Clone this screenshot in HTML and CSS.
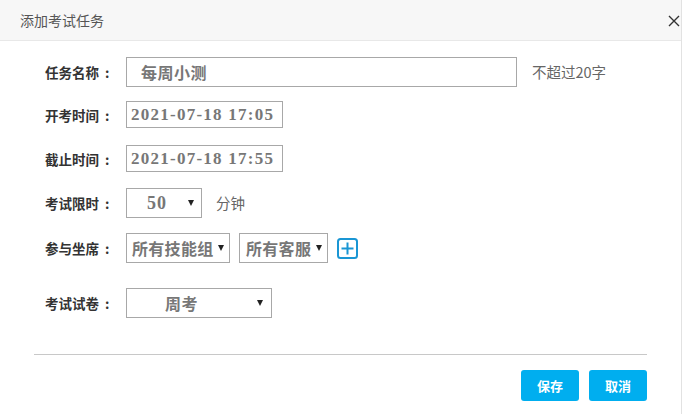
FILE: index.html
```html
<!DOCTYPE html>
<html>
<head>
<meta charset="utf-8">
<link rel="stylesheet" href="styles.css">
</head>
<body>
<div class="dialog">
  <div class="header">
    <span class="title">添加考试任务</span>
    <svg class="close" width="12" height="12" viewBox="0 0 12 12"><path d="M1 1 L11 11 M11 1 L1 11" stroke="#333" stroke-width="1.4" fill="none"/></svg>
  </div>
  <div class="form">
    <div class="row r1">
      <span class="label">任务名称<span class="colon">:</span></span>
      <div class="box name">每周小测</div>
      <span class="hint">不超过20字</span>
    </div>
    <div class="row r2">
      <span class="label">开考时间<span class="colon">:</span></span>
      <div class="box date">2021-07-18 17:05</div>
    </div>
    <div class="row r3">
      <span class="label">截止时间<span class="colon">:</span></span>
      <div class="box date">2021-07-18 17:55</div>
    </div>
    <div class="row r4">
      <span class="label">考试限时<span class="colon">:</span></span>
      <div class="box sel s-min"><span class="num">50</span><i class="arrow"></i></div>
      <span class="unit">分钟</span>
    </div>
    <div class="row r5">
      <span class="label">参与坐席<span class="colon">:</span></span>
      <div class="box sel s-group"><span>所有技能组</span><i class="arrow"></i></div>
      <div class="box sel s-agent"><span>所有客服</span><i class="arrow"></i></div>
      <svg class="plus" width="21" height="21" viewBox="0 0 21 21"><rect x="1" y="1" width="19" height="19" rx="2.5" fill="none" stroke="#1a96d4" stroke-width="2"/><path d="M10.5 4.5 V16.5 M4.5 10.5 H16.5" stroke="#1a96d4" stroke-width="2"/></svg>
    </div>
    <div class="row r6">
      <span class="label">考试试卷<span class="colon">:</span></span>
      <div class="box sel s-paper"><span>周考</span><i class="arrow"></i></div>
    </div>
  </div>
  <div class="divider"></div>
  <div class="actions">
    <button class="btn">保存</button>
    <button class="btn">取消</button>
  </div>
</div>
</body>
</html>
```
FILE: styles.css
```css
html, body {
  margin: 0;
  padding: 0;
  background: #fff;
}
body {
  font-family: "Noto Sans CJK SC", "Liberation Sans", sans-serif;
}
.dialog {
  width: 681px;
  height: 414px;
  border-right: 1px solid #e2e2e2;
  box-sizing: content-box;
}
.header {
  height: 41px;
  box-sizing: border-box;
  background: #f7f7f7;
  border-bottom: 1px solid #e8e8e8;
  display: flex;
  align-items: center;
  padding: 0 1px 0 20px;
}
.title {
  font-size: 14px;
  color: #555;
  line-height: 20px;
  flex: 1;
}
.close {
  display: block;
  margin-top: 2px;
}
.form {
  padding-left: 45px;
}
.row {
  display: flex;
  align-items: center;
}
.r1 { margin-top: 16px; }
.r2 { margin-top: 14px; }
.r3 { margin-top: 17px; }
.r4 { margin-top: 16px; }
.r5 { margin-top: 15px; }
.r6 { margin-top: 25px; }
.label {
  width: 81px;
  font-size: 13.5px;
  font-weight: 700;
  color: #333;
  line-height: 20px;
}
.colon {
  margin-left: 6px;
}
.box {
  box-sizing: border-box;
  border: 1px solid #a8a8a8;
  height: 30px;
  display: flex;
  align-items: center;
  color: #777;
  font-size: 16px;
  font-weight: 700;
  line-height: 20px;
  white-space: nowrap;
}
.name {
  width: 391px;
  padding-left: 14px;
  letter-spacing: 0.5px;
}
.hint {
  margin-left: 15px;
  font-size: 14.5px;
  color: #666;
  line-height: 20px;
}
.date {
  width: 157px;
  height: 27px;
  padding-left: 4px;
  font-family: "Liberation Serif", serif;
  font-size: 17px;
  letter-spacing: 1.25px;
}
.sel {
  padding-right: 7px;
}
.sel .arrow {
  margin-left: auto;
  width: 0;
  height: 0;
  border-left: 3.5px solid transparent;
  border-right: 3.5px solid transparent;
  border-top: 6px solid #222;
}
.num {
  font-family: "Liberation Serif", serif;
  font-size: 18px;
  letter-spacing: 1px;
}
.s-min {
  width: 76px;
  padding-left: 20px;
}
.unit {
  margin-left: 14px;
  font-size: 14.5px;
  color: #666;
  line-height: 20px;
}
.s-group {
  width: 104px;
  padding-left: 5px;
  padding-right: 5px;
  letter-spacing: 0.3px;
}
.s-agent {
  width: 89px;
  margin-left: 9px;
  padding-left: 6px;
  padding-right: 5px;
  letter-spacing: 0.3px;
}
.plus {
  display: block;
  margin-left: 9px;
}
.s-paper {
  width: 146px;
  padding-left: 38px;
  padding-right: 8px;
  letter-spacing: 0.5px;
}
.divider {
  margin: 36px 0 0 34px;
  width: 613px;
  height: 1px;
  background: #c8c8c8;
}
.actions {
  display: flex;
  justify-content: flex-end;
  gap: 10px;
  padding-right: 34px;
  margin-top: 15px;
}
.btn {
  width: 58px;
  height: 31px;
  border: none;
  border-radius: 3px;
  background: #00aeef;
  color: #fff;
  font-family: "Noto Sans CJK SC", sans-serif;
  font-size: 13px;
  font-weight: 700;
  padding: 0;
  line-height: 20px;
}
```
